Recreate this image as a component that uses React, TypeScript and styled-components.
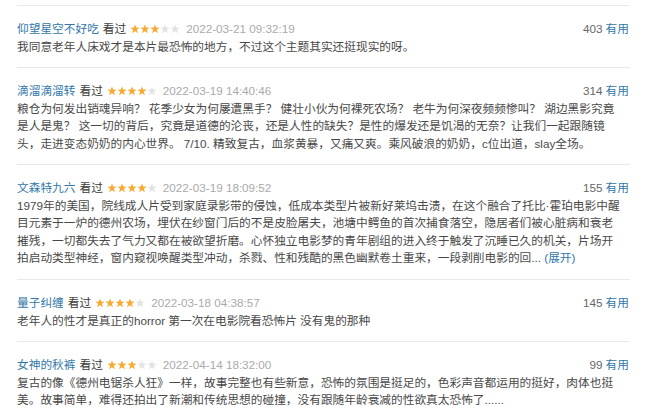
import React from "react";
import styled, { createGlobalStyle } from "styled-components";

const Global = createGlobalStyle`
  html, body { margin: 0; padding: 0; background: #fff; }
  body { font-family: "Liberation Sans", Arial, "Noto Sans CJK SC", sans-serif; }
`;

const List = styled.div`
  width: 613px;
  margin-left: 17px;
  padding-top: 5px;
`;

const Item = styled.div`
  border-top: 1px solid #e9e9e9;
  padding: 14px 1px 12px 0;
`;

const Header = styled.div`
  display: flex;
  align-items: center;
  height: 17.55px;
  font-size: 11.7px;
  line-height: 17.55px;
  white-space: nowrap;
`;

const User = styled.span`
  color: #3377aa;
  margin-right: 4px;
`;

const Watched = styled.span`
  color: #3a3a3a;
  margin-right: 4px;
`;

const Stars = styled.span`
  display: inline-flex;
  align-items: center;
  margin-right: 6px;
`;

const Time = styled.span`
  color: #aaa;
`;

const Votes = styled.span`
  margin-left: auto;
  color: #666;
`;

const Useful = styled.span`
  color: #3377aa;
  margin-left: 3px;
`;

const Body = styled.div`
  font-size: 11.7px;
  line-height: 17.55px;
  color: #494949;
  white-space: nowrap;
`;

const Line = styled.div``;

const More = styled.span`
  color: #3377aa;
`;

const Star: React.FC<{ on: boolean }> = ({ on }) => (
  <svg width="10" height="10" viewBox="0 0 10 10">
    <path
      d="M5 0.4 L6.2 3.6 L9.6 3.7 L6.9 5.8 L7.9 9.2 L5 7.2 L2.1 9.2 L3.1 5.8 L0.4 3.7 L3.8 3.6 Z"
      fill={on ? "#f6ab35" : "#e3e3e3"}
    />
  </svg>
);

type Review = {
  user: string;
  rating: number;
  time: string;
  votes: number;
  lines: React.ReactNode[];
};

const reviews: Review[] = [
  {
    user: "仰望星空不好吃",
    rating: 3,
    time: "2022-03-21 09:32:19",
    votes: 403,
    lines: ["我同意老年人床戏才是本片最恐怖的地方，不过这个主题其实还挺现实的呀。"],
  },
  {
    user: "滴溜滴溜转",
    rating: 4,
    time: "2022-03-19 14:40:46",
    votes: 314,
    lines: [
      "粮仓为何发出销魂异响？ 花季少女为何屡遭黑手？ 健壮小伙为何裸死农场？ 老牛为何深夜频频惨叫？ 湖边黑影究竟",
      "是人是鬼？ 这一切的背后，究竟是道德的沦丧，还是人性的缺失？是性的爆发还是饥渴的无奈？让我们一起跟随镜",
      "头，走进变态奶奶的内心世界。 7/10. 精致复古，血浆黄暴，又痛又爽。乘风破浪的奶奶，c位出道，slay全场。",
    ],
  },
  {
    user: "文森特九六",
    rating: 4,
    time: "2022-03-19 18:09:52",
    votes: 155,
    lines: [
      "1979年的美国，院线成人片受到家庭录影带的侵蚀，低成本类型片被新好莱坞击溃，在这个融合了托比·霍珀电影中醒",
      "目元素于一炉的德州农场，埋伏在纱窗门后的不是皮脸屠夫，池塘中鳄鱼的首次捕食落空，隐居者们被心脏病和衰老",
      "摧残，一切都失去了气力又都在被欲望折磨。心怀独立电影梦的青年剧组的进入终于触发了沉睡已久的机关，片场开",
      <>
        拍启动类型神经，窗内窥视唤醒类型冲动，杀戮、性和残酷的黑色幽默卷土重来，一段剥削电影的回... <More>(展开)</More>
      </>,
    ],
  },
  {
    user: "量子纠缠",
    rating: 4,
    time: "2022-03-18 04:38:57",
    votes: 145,
    lines: ["老年人的性才是真正的horror 第一次在电影院看恐怖片 没有鬼的那种"],
  },
  {
    user: "女神的秋裤",
    rating: 3,
    time: "2022-04-14 18:32:00",
    votes: 99,
    lines: [
      "复古的像《德州电锯杀人狂》一样，故事完整也有些新意，恐怖的氛围是挺足的，色彩声音都运用的挺好，肉体也挺",
      "美。故事简单，难得还拍出了新潮和传统思想的碰撞，没有跟随年龄衰减的性欲真太恐怖了......",
    ],
  },
];

export default function App() {
  return (
    <>
      <Global />
      <List>
        {reviews.map((r) => (
          <Item key={r.user}>
            <Header>
              <User>{r.user}</User>
              <Watched>看过</Watched>
              <Stars>
                {[0, 1, 2, 3, 4].map((i) => (
                  <Star key={i} on={i < r.rating} />
                ))}
              </Stars>
              <Time>{r.time}</Time>
              <Votes>{r.votes}</Votes>
              <Useful>有用</Useful>
            </Header>
            <Body>
              {r.lines.map((l, i) => (
                <Line key={i}>{l}</Line>
              ))}
            </Body>
          </Item>
        ))}
      </List>
    </>
  );
}
